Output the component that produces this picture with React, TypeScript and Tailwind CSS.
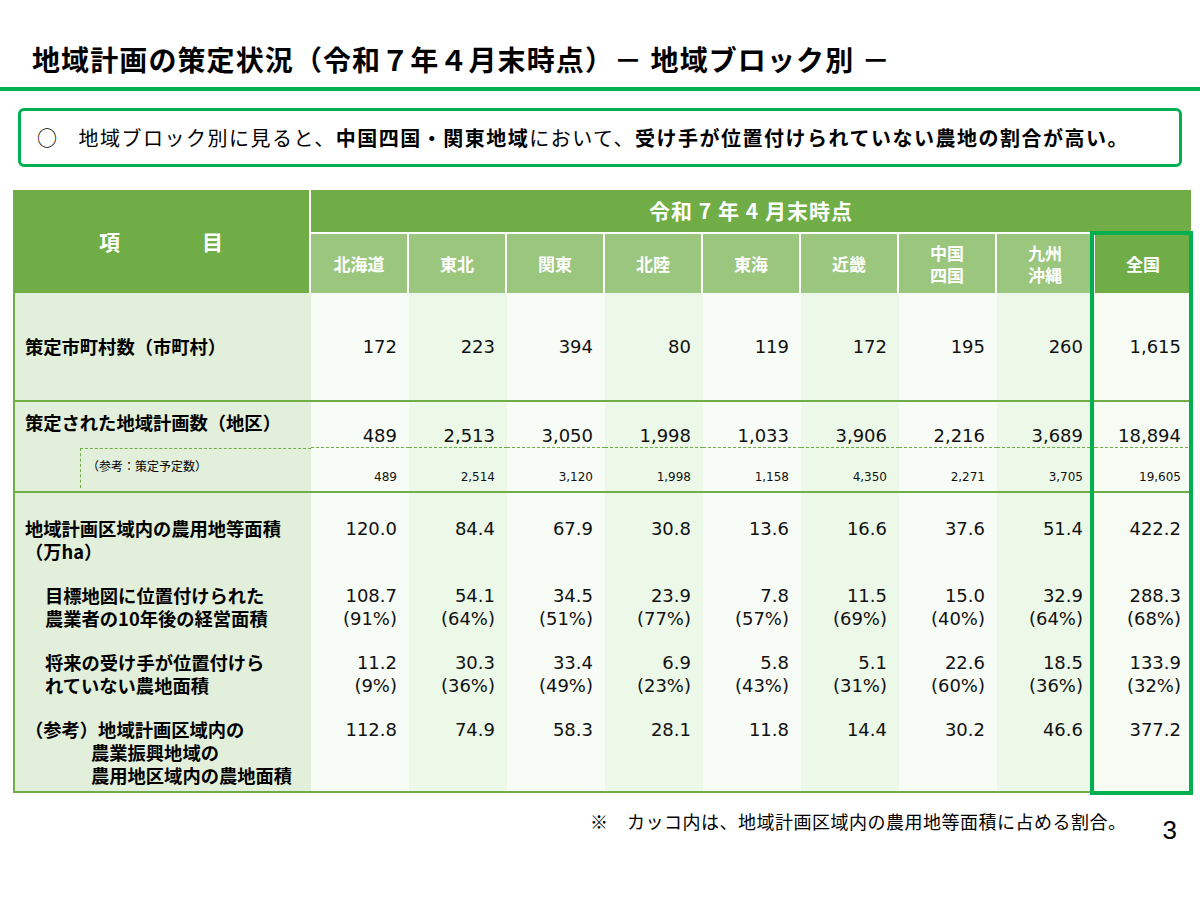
import React from "react";

const COLS = "grid grid-cols-[296px_repeat(9,98px)]";

const colBg = [
  "bg-[#f8fcf6]",
  "bg-[#ecf8e8]",
  "bg-[#f8fcf6]",
  "bg-[#ecf8e8]",
  "bg-[#f8fcf6]",
  "bg-[#ecf8e8]",
  "bg-[#f8fcf6]",
  "bg-[#ecf8e8]",
  "bg-[#f6fbf4]",
];

const regions = [
  ["北海道"],
  ["東北"],
  ["関東"],
  ["北陸"],
  ["東海"],
  ["近畿"],
  ["中国", "四国"],
  ["九州", "沖縄"],
  ["全国"],
];

const municipalities = ["172", "223", "394", "80", "119", "172", "195", "260", "1,615"];
const plans = ["489", "2,513", "3,050", "1,998", "1,033", "3,906", "2,216", "3,689", "18,894"];
const plansPlanned = ["489", "2,514", "3,120", "1,998", "1,158", "4,350", "2,271", "3,705", "19,605"];
const area = ["120.0", "84.4", "67.9", "30.8", "13.6", "16.6", "37.6", "51.4", "422.2"];
const target = [
  ["108.7", "(91%)"],
  ["54.1", "(64%)"],
  ["34.5", "(51%)"],
  ["23.9", "(77%)"],
  ["7.8", "(57%)"],
  ["11.5", "(69%)"],
  ["15.0", "(40%)"],
  ["32.9", "(64%)"],
  ["288.3", "(68%)"],
];
const unassigned = [
  ["11.2", "(9%)"],
  ["30.3", "(36%)"],
  ["33.4", "(49%)"],
  ["6.9", "(23%)"],
  ["5.8", "(43%)"],
  ["5.1", "(31%)"],
  ["22.6", "(60%)"],
  ["18.5", "(36%)"],
  ["133.9", "(32%)"],
];
const promotion = ["112.8", "74.9", "58.3", "28.1", "11.8", "14.4", "30.2", "46.6", "377.2"];

const num = "font-['DejaVu_Sans',sans-serif] text-[18px] text-[#111]";

export default function App() {
  return (
    <div className="w-[1200px] h-[900px] bg-white font-['Noto_Sans_CJK_JP',sans-serif] text-black overflow-hidden">
      {/* Title */}
      <h1 className="pt-[42px] pl-[32px] text-[28px] leading-[34px] font-bold tracking-[1.1px]">
        地域計画の策定状況（令和７年４月末時点）－ 地域ブロック別 －
      </h1>
      <div className="mt-[11px] h-[4px] bg-[#00b050]" />

      {/* Summary box */}
      <div className="mt-[17px] mx-[18px] h-[59px] border-[3px] border-[#00b050] rounded-[6px] flex items-center pl-[16px] text-[20px] tracking-[1.5px]">
        <span className="mr-[20px]">○</span>
        <span>
          地域ブロック別に見ると、<b>中国四国・関東地域</b>において、
          <b>受け手が位置付けられていない農地の割合が高い。</b>
        </span>
      </div>

      {/* Table */}
      <div className="relative mt-[23px] ml-[13px] w-[1178px]">
        {/* header */}
        <div className={`${COLS} grid-rows-[42px_61px] text-white font-bold`}>
          <div className="row-span-2 bg-[#70ad47] flex items-center justify-center gap-[82px] text-[21px]">
            <span>項</span>
            <span>目</span>
          </div>
          <div className="col-span-9 bg-[#70ad47] border-l-2 border-white flex items-center justify-center text-[21px] tracking-[1px]">
            令和 7 年 4 月末時点
          </div>
          {regions.map((r, i) => (
            <div
              key={r.join("")}
              className={`border-l-2 border-t-2 border-white flex flex-col items-center justify-center text-[17px] leading-[22px] ${
                i === 8 ? "bg-[#70ad47]" : "bg-[#9bc67e]"
              }`}
            >
              {r.map((t) => (
                <span key={t}>{t}</span>
              ))}
            </div>
          ))}
        </div>

        <div className="border-l-2 border-[#70ad47]">
          {/* row 1 */}
          <div className={`${COLS} h-[109px] border-b-2 border-[#70ad47]`}>
            <div className="bg-[#e2efda] flex items-center pl-[10px] text-[18.3px] font-bold">
              策定市町村数（市町村）
            </div>
            {municipalities.map((v, i) => (
              <div key={i} className={`${colBg[i]} flex items-center justify-end pr-[12px] ${num}`}>
                {v}
              </div>
            ))}
          </div>

          {/* row 2 */}
          <div className={`${COLS} h-[91px] border-b-2 border-[#70ad47]`}>
            <div className="bg-[#e2efda] flex flex-col">
              <div className="h-[46px] pt-[9px] pl-[10px] text-[18.3px] leading-[23px] font-bold">
                策定された地域計画数（地区）
              </div>
              <div className="flex-1 mb-[3px] ml-[65px] border-l border-t border-dashed border-[#70ad47] pt-[9px] pl-[6px] text-[12px] leading-[16px]">
                （参考：策定予定数）
              </div>
            </div>
            {plans.map((v, i) => (
              <div key={i} className={`${colBg[i]} flex flex-col`}>
                <div className={`h-[46px] border-b border-dashed border-[#70ad47] flex items-end justify-end pr-[12px] leading-[22px] ${num}`}>
                  {v}
                </div>
                <div className="pt-[21px] pr-[12px] text-right font-['DejaVu_Sans',sans-serif] text-[12px] leading-[16px] text-[#111]">
                  {plansPlanned[i]}
                </div>
              </div>
            ))}
          </div>

          {/* row 3 */}
          <div className={`${COLS} h-[300px] border-b-2 border-[#70ad47]`}>
            <div className="bg-[#e2efda] pt-[24px] pl-[10px] text-[18.3px] leading-[23px] font-bold">
              <div className="h-[67px]">
                <div>地域計画区域内の農用地等面積</div>
                <div>（万ha）</div>
              </div>
              <div className="h-[67px] pl-[20px]">
                <div>目標地図に位置付けられた</div>
                <div>農業者の10年後の経営面積</div>
              </div>
              <div className="h-[67px] pl-[20px]">
                <div>将来の受け手が位置付けら</div>
                <div>れていない農地面積</div>
              </div>
              <div>
                <div>（参考）地域計画区域内の</div>
                <div className="pl-[66px]">農業振興地域の</div>
                <div className="pl-[66px]">農用地区域内の農地面積</div>
              </div>
            </div>
            {area.map((v, i) => (
              <div key={i} className={`${colBg[i]} pt-[24px] pr-[12px] text-right leading-[23px] ${num}`}>
                <div className="h-[67px]">{v}</div>
                <div className="h-[67px]">
                  <div>{target[i][0]}</div>
                  <div>{target[i][1]}</div>
                </div>
                <div className="h-[67px]">
                  <div>{unassigned[i][0]}</div>
                  <div>{unassigned[i][1]}</div>
                </div>
                <div>{promotion[i]}</div>
              </div>
            ))}
          </div>
        </div>

        {/* 全国 highlight frame */}
        <div className="absolute left-[1077px] top-[41px] w-[103px] h-[564px] border-4 border-[#00b050] pointer-events-none" />
      </div>

      {/* Footnote */}
      <div className="mt-[16px] flex items-start">
        <p className="ml-[590px] text-[18px] leading-[24px] tracking-[0.5px]">
          ※　カッコ内は、地域計画区域内の農用地等面積に占める割合。
        </p>
        <span className="ml-[36px] mt-[6px] font-['Liberation_Sans',sans-serif] text-[26px] leading-[30px]">
          3
        </span>
      </div>
    </div>
  );
}
